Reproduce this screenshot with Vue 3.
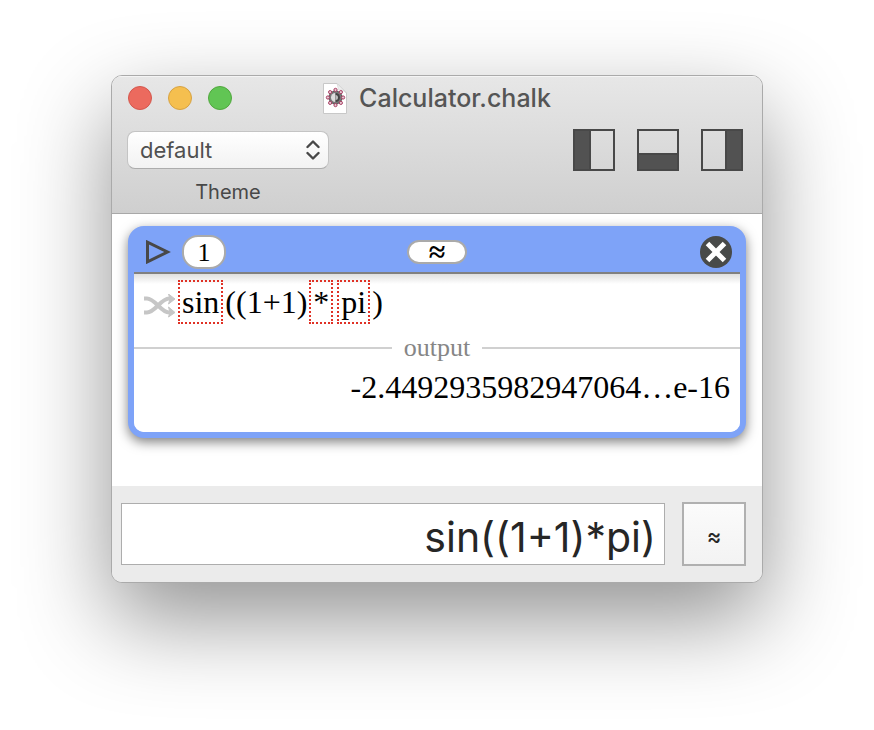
<script setup>
import { ref } from 'vue'

const theme = ref('default')
const expression = ref('sin((1+1)*pi)')
const tokens = [
  { text: 'sin', boxed: true },
  { text: '((1+1)', boxed: false },
  { text: '*', boxed: true },
  { text: 'pi', boxed: true },
  { text: ')', boxed: false },
]
const panels = [
  { name: 'Left panel', x: 1, y: 1, w: 16, h: 40 },
  { name: 'Bottom panel', x: 1, y: 25, w: 40, h: 16 },
  { name: 'Right panel', x: 25, y: 1, w: 16, h: 40 },
]
const petals = Array.from({ length: 8 }, (_, i) => ({
  x: 12.5 + 7.6 * Math.cos((i * Math.PI) / 4),
  y: 14.5 + 7.6 * Math.sin((i * Math.PI) / 4),
}))
</script>

<template>
  <main class="desktop">
    <section class="window">
      <header class="header">
        <div class="titlebar">
          <div class="lights">
            <button class="light red" aria-label="Close"></button>
            <button class="light yellow" aria-label="Minimize"></button>
            <button class="light green" aria-label="Zoom"></button>
          </div>
          <h1 class="title">
            <svg class="doc" width="24" height="31" viewBox="0 0 24 31">
              <path d="M.5.5H14L23.500 10V30.500H.5Z" fill="#fff" stroke="#c8c8c8" />
              <path d="M14 .5 23.500 10C21 7 17 7 15.500 6.500Z" fill="#eee" stroke="#d4d4d4" stroke-width=".6" />
              <circle cx="12.500" cy="14.500" r="6.500" fill="#777" stroke="#555" />
              <path d="M12.500 10A4.500 4.500 0 0 0 12.500 19Z" fill="#ddd" />
              <path d="M12.500 10A4.500 4.500 0 0 1 12.500 19Z" fill="#444" />
              <path d="M12.500 12A2.500 2.500 0 0 1 12.500 17Z" fill="#bbb" />
              <circle v-for="(p, i) in petals" :key="i" :cx="p.x" :cy="p.y" r="1.600" fill="#e4c9d1" stroke="#a83c62" />
            </svg>
            <span>Calculator.chalk</span>
          </h1>
        </div>
        <div class="toolbar">
          <div class="theme">
            <div class="select-wrap">
              <select id="theme" v-model="theme">
                <option>default</option>
              </select>
              <svg class="chevrons" width="14" height="20" viewBox="0 0 14 20">
                <path d="M1.500 7 7 1.500 12.500 7M1.500 13 7 18.500 12.500 13" fill="none" stroke="#484848" stroke-width="2.400" stroke-linecap="round" stroke-linejoin="round" />
              </svg>
            </div>
            <label for="theme">Theme</label>
          </div>
          <div class="panels">
            <button v-for="p in panels" :key="p.name" class="plain" :aria-label="p.name">
              <svg width="42" height="42" viewBox="0 0 42 42">
                <rect :x="p.x" :y="p.y" :width="p.w" :height="p.h" fill="#525252" stroke="#484848" stroke-width="2" />
                <rect x="1" y="1" width="40" height="40" fill="none" stroke="#484848" stroke-width="2" />
              </svg>
            </button>
          </div>
        </div>
      </header>

      <div class="sheet">
        <article class="card">
          <div class="card-bar">
            <div class="bar-start">
              <button class="plain" aria-label="Run">
                <svg width="26" height="24" viewBox="0 0 26 24">
                  <path d="M1.500 2.200V21.800L21.500 12Z" fill="none" stroke="#484848" stroke-width="3" />
                </svg>
              </button>
              <span class="index">1</span>
            </div>
            <button class="approx">≈</button>
            <button class="plain close" aria-label="Remove">
              <svg width="32" height="32" viewBox="0 0 32 32">
                <circle cx="16" cy="16" r="16" fill="#484a49" />
                <path d="M7.500 7.500 24.500 24.500M24.500 7.500 7.500 24.500" stroke="#fff" stroke-width="5" />
              </svg>
            </button>
          </div>
          <div class="card-body">
            <div class="formula">
              <svg class="shuffle" width="32" height="24" viewBox="0 0 32 24">
                <g fill="none" stroke="#c6c6c6" stroke-width="4">
                  <path d="M0 4.500H3C11 4.500 17 18.500 25 18.500H27" />
                  <path d="M0 18.500H3C11 18.500 17 4.500 25 4.500H27" />
                </g>
                <path d="M24.500 0 31 5 24.500 10 26 5ZM24.500 13 31 18.500 24.500 23 26 18.500Z" fill="#c6c6c6" stroke="#c6c6c6" />
              </svg>
              <span v-for="(t, i) in tokens" :key="i" :class="['token', { boxed: t.boxed }]">{{ t.text }}</span>
            </div>
            <div class="divider"><span>output</span></div>
            <output class="result">-2.4492935982947064…e-16</output>
          </div>
        </article>
      </div>

      <footer class="footer">
        <input v-model="expression" class="entry" type="text" aria-label="Expression" />
        <button class="evaluate">≈</button>
      </footer>
    </section>
  </main>
</template>

<style>
body {
  background: #fff;
}
</style>

<style scoped>
* {
  box-sizing: border-box;
}
button,
input,
select {
  margin: 0;
  padding: 0;
  color: inherit;
  font: inherit;
}
svg {
  display: block;
}
.desktop {
  min-height: 100vh;
  padding: 75px 111px;
  overflow: hidden;
  font-family: Inter, "Liberation Sans", sans-serif;
  color: #484848;
}
.window {
  border: 1px solid #aaa;
  border-radius: 11px;
  background: #fff;
  overflow: hidden;
  box-shadow: 0 36px 90px rgba(0, 0, 0, 0.43);
}
.header {
  height: 138px;
  border-bottom: 1px solid #a8a8a8;
  background: linear-gradient(#e7e7e7, #cfcfcf);
  box-shadow: inset 0 1px #f4f4f4;
}
.titlebar {
  display: grid;
  grid-template-columns: 1fr auto 1fr;
  align-items: center;
  height: 44px;
  padding: 0 16px;
}
.lights {
  display: flex;
  gap: 16px;
}
.light {
  width: 24px;
  height: 24px;
  border: 1px solid;
  border-radius: 50%;
}
.red {
  background: #ec6a5e;
  border-color: #d3574d;
}
.yellow {
  background: #f5bf4f;
  border-color: #d6a243;
}
.green {
  background: #61c554;
  border-color: #51a73e;
}
.title {
  display: flex;
  align-items: center;
  gap: 12px;
  margin: 0;
  font-size: 25px;
  line-height: 34px;
  font-weight: 500;
  color: #555;
}
.toolbar {
  display: flex;
  justify-content: space-between;
  padding: 9px 19px 0 15px;
}
.theme {
  display: flex;
  flex-direction: column;
  align-items: center;
  gap: 12px;
  padding-top: 2px;
}
.theme label {
  font-size: 20px;
  line-height: 22px;
}
.select-wrap {
  position: relative;
}
.select-wrap select {
  display: block;
  width: 202px;
  height: 38px;
  padding: 0 12px;
  appearance: none;
  border: 1px solid #c4c4c4;
  border-bottom-color: #acacac;
  border-radius: 8px;
  background: linear-gradient(#fff, #f2f2f2);
  font-size: 22px;
  color: #505050;
}
.chevrons {
  position: absolute;
  top: 9px;
  right: 9px;
  pointer-events: none;
}
.panels {
  display: flex;
  align-items: flex-start;
  gap: 22px;
}
.plain {
  border: 0;
  background: none;
}
.sheet {
  padding: 12px 16px 48px;
}
.card {
  border: 6px solid #7ea3f8;
  border-radius: 16px;
  background: #fff;
  box-shadow: 0 4px 12px rgba(0, 0, 0, 0.5);
  font-family: "Liberation Serif", serif;
  color: #000;
}
.card-bar {
  display: grid;
  grid-template-columns: 1fr auto 1fr;
  align-items: center;
  height: 42px;
  padding: 0 8px;
  border-bottom: 2px solid #808080;
  background: #7ea3f8;
}
.bar-start {
  display: flex;
  align-items: center;
  gap: 10px;
  padding-left: 4px;
}
.index {
  width: 44px;
  height: 34px;
  border: 2px solid #aaa;
  border-radius: 16px;
  background: #fff;
  font-size: 26px;
  line-height: 32px;
  text-align: center;
}
.approx {
  width: 60px;
  height: 24px;
  border: 2px solid #aaa;
  border-radius: 12px;
  background: #fff;
  font-size: 30px;
  line-height: 18px;
  font-weight: 700;
}
.close {
  justify-self: end;
}
.card-body {
  padding: 6px 0 26px;
  border-radius: 0 0 10px 10px;
  background: linear-gradient(#dfdfdf, #fff 10px);
}
.formula {
  display: flex;
  align-items: center;
  gap: 2px;
  padding-left: 10px;
  font-size: 32px;
  line-height: 40px;
}
.shuffle {
  margin-top: 8px;
}
.token.boxed {
  padding: 0 2px;
  border: 2px dotted #e03125;
}
.boxed + .boxed {
  margin-left: 2px;
}
.divider {
  display: flex;
  align-items: center;
  gap: 12px;
  margin-top: 9px;
  font-size: 26px;
  line-height: 30px;
  color: #868686;
}
.divider::before,
.divider::after {
  content: "";
  flex: 1;
  height: 2px;
  background: #d0d0d0;
}
.result {
  display: block;
  padding: 6px 10px 1px 0;
  font-size: 32px;
  line-height: 36px;
  text-align: right;
}
.footer {
  display: flex;
  align-items: center;
  gap: 17px;
  padding: 16px 16px 16px 9px;
  background: #ebebeb;
}
.entry {
  flex: 1;
  min-width: 0;
  height: 62px;
  padding: 6px 8px 0;
  border: 1px solid #adadad;
  background: #fff;
  font-size: 41px;
  color: #262626;
  text-align: right;
}
.evaluate {
  width: 64px;
  height: 64px;
  padding-top: 4px;
  border: 2px solid #b0b0b0;
  background: linear-gradient(#fbfbfb, #f3f3f3);
  font-size: 22px;
  font-weight: 500;
  color: #262626;
}
</style>
